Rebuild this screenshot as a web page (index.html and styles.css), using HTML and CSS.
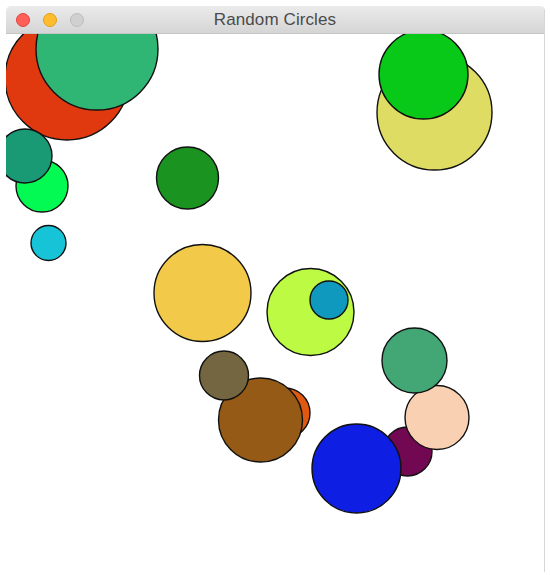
FILE: index.html
```html
<!DOCTYPE html>
<html>
<head>
<meta charset="utf-8">
<title>Random Circles</title>
<link rel="stylesheet" href="styles.css">
</head>
<body>
<div class="window">
  <div class="titlebar">
    <div class="lights">
      <span class="light red"></span>
      <span class="light yellow"></span>
      <span class="light gray"></span>
    </div>
    <div class="title">Random Circles</div>
  </div>
  <div class="canvas">
    <svg class="drawing" viewBox="6 34 538 538" width="538" height="538" xmlns="http://www.w3.org/2000/svg">
      <g class="circles">
        <circle cx="67" cy="78" r="62" fill="#e0380f"/>
        <circle cx="97" cy="49" r="61" fill="#2fb574"/>
        <circle cx="434.5" cy="112.5" r="57.5" fill="#dfdc64"/>
        <circle cx="423.5" cy="74.5" r="44.5" fill="#08c918"/>
        <circle cx="42" cy="186" r="26" fill="#02fa52"/>
        <circle cx="25" cy="156" r="27" fill="#1a9975"/>
        <circle cx="48.5" cy="243" r="17.5" fill="#17c3d6"/>
        <circle cx="187.5" cy="178" r="31" fill="#1b9320"/>
        <circle cx="202.5" cy="293" r="48.5" fill="#f3c94a"/>
        <circle cx="310.5" cy="312" r="43.5" fill="#bcfa43"/>
        <circle cx="329" cy="300" r="19" fill="#1099be"/>
        <circle cx="285" cy="413" r="25" fill="#e05910"/>
        <circle cx="260.5" cy="420" r="42" fill="#955a16"/>
        <circle cx="224" cy="375.5" r="24.5" fill="#736640"/>
        <circle cx="407.5" cy="451.5" r="24.5" fill="#730852"/>
        <circle cx="437" cy="417.5" r="32" fill="#f9d1b2"/>
        <circle cx="414.5" cy="360.5" r="32.5" fill="#43a675"/>
        <circle cx="356.5" cy="468.5" r="44.5" fill="#0e1fe3"/>
      </g>
    </svg>
  </div>
</div>
</body>
</html>
```
FILE: styles.css
```css
html, body {
  margin: 0;
  padding: 0;
  background: #ffffff;
}
body {
  width: 550px;
  height: 575px;
  overflow: hidden;
  font-family: "Liberation Sans", Arial, sans-serif;
}
.window {
  margin: 6px 0 0 6px;
  width: 538px;
  height: 566px;
  border-right: 1px solid #d6d6d6;
  border-radius: 5px 5px 0 0;
  display: flex;
  flex-direction: column;
  overflow: hidden;
  background: #ffffff;
}
.titlebar {
  height: 27px;
  flex: none;
  display: flex;
  align-items: center;
  justify-content: center;
  background: linear-gradient(#ebebeb, #d5d5d5);
  border-bottom: 1px solid #c4c4c4;
  position: relative;
}
.lights {
  position: absolute;
  left: 10px;
  top: 7px;
  display: flex;
  gap: 13px;
}
.light {
  width: 14px;
  height: 14px;
  border-radius: 50%;
  box-sizing: border-box;
}
.light.red { background: #fe5f57; border: 1px solid #e2463f; }
.light.yellow { background: #febc2e; border: 1px solid #e1a116; }
.light.gray { background: #d0d0d0; border: 1px solid #bcbcbc; }
.title {
  font-size: 17px;
  color: #4b4b4b;
  letter-spacing: 0.1px;
  padding-top: 1px;
}
.canvas {
  flex: 1;
  background: #ffffff;
  overflow: hidden;
}
.drawing {
  display: block;
}
.circles circle {
  stroke: #111111;
  stroke-width: 1.4;
}
```
